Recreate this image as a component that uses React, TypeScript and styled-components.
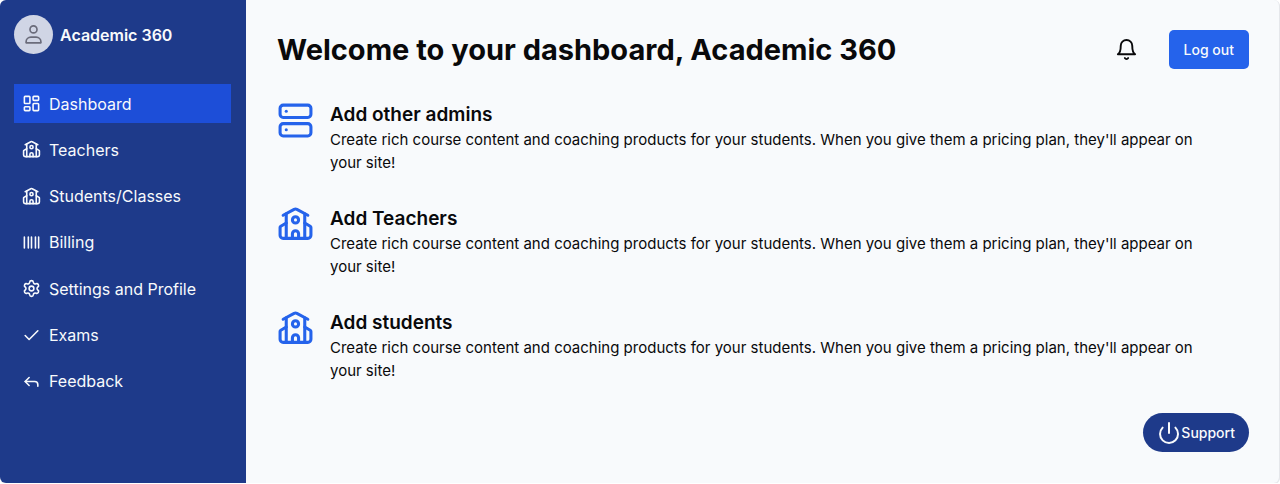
import React from "react";
import styled, { createGlobalStyle } from "styled-components";
import { LayoutDashboard, School, Settings, Check, Server, Barcode, Reply } from "lucide-react";

const GlobalStyle = createGlobalStyle`
  *, *::before, *::after { box-sizing: border-box; }
  body { margin: 0; background: #fff; color: #09090b; font-family: Inter, sans-serif; font-size: 16px; }
  h1, h2, p, ul { margin: 0; padding: 0; }
  ul { list-style: none; }
  button { font-family: inherit; cursor: pointer; }
`;

const Shell = styled.div`
  display: flex;
  min-height: calc(100vh - 1px);
  overflow: hidden;
  border-radius: 6px;
  background: #f8fafc;
  border-right: 1px solid #e5e7eb;
  box-shadow: 0 1px 0 #e5e7eb;
`;

const Sidebar = styled.aside`
  flex: 0 0 246px;
  padding: 15px 15px 15px 14px;
  background: #1e3a8a;
  color: #f8fafc;
`;

const Profile = styled.div`
  display: flex;
  align-items: center;
  gap: 7px;
  margin-bottom: 30px;
  font-size: 16px;
  line-height: 18px;
  font-weight: 600;
`;

const Avatar = styled.span`
  display: grid;
  place-items: center;
  width: 39px;
  height: 39px;
  border-radius: 50%;
  background: #d0d5e5;
  color: #6b6c7b;
`;

const NavList = styled.ul`
  display: flex;
  flex-direction: column;
  justify-content: space-between;
  min-height: 317px;
`;

const NavLink = styled.a<{ $active?: boolean }>`
  display: flex;
  align-items: center;
  gap: 8px;
  height: 39px;
  padding: 0 8px;
  background: ${({ $active }) => ($active ? "#1d4ed8" : "transparent")};
  color: inherit;
  font-size: 16px;
  text-decoration: none;
`;

const Main = styled.main`
  flex: 1;
  min-width: 0;
  padding: 30px 30px 31px 31px;
`;

const Header = styled.header`
  display: flex;
  align-items: center;
  justify-content: space-between;
  margin-bottom: 33px;
`;

const Title = styled.h1`
  font-size: 29px;
  line-height: 39px;
  font-weight: 700;
`;

const Actions = styled.div`
  display: flex;
  align-items: center;
  gap: 31px;
`;

const IconButton = styled.button`
  display: grid;
  padding: 0;
  border: 0;
  background: none;
  color: inherit;
`;

const LogoutButton = styled.button`
  height: 39px;
  padding: 0 15px;
  border: 0;
  border-radius: 5px;
  background: #2563eb;
  color: #f8fafc;
  font-size: 14px;
  font-weight: 500;
`;

const Features = styled.div`
  display: grid;
  gap: 32px;
`;

const Feature = styled.section`
  display: flex;
  gap: 16px;
  padding-right: 24px;
  svg { flex: none; color: #2563eb; }
`;

const FeatureTitle = styled.h2`
  font-size: 19px;
  line-height: 26px;
  font-weight: 600;
`;

const FeatureText = styled.p`
  font-size: 15px;
  line-height: 23px;
`;

const Footer = styled.footer`
  display: flex;
  justify-content: flex-end;
  margin-top: 31px;
`;

const SupportButton = styled.button`
  display: flex;
  align-items: center;
  height: 39px;
  padding: 0 14px;
  border: 0;
  border-radius: 20px;
  background: #1e3a8a;
  color: #f8fafc;
  font-size: 14px;
  font-weight: 500;
`;

type GlyphProps = { size: number; stroke?: number; d: string };

const Glyph = ({ size, stroke = 2, d }: GlyphProps) => (
  <svg width={size} height={size} viewBox="0 0 24 24" fill="none" stroke="currentColor"
    strokeWidth={stroke} strokeLinecap="round" strokeLinejoin="round" aria-hidden="true">
    <path d={d} />
  </svg>
);

const USER = "M12 2.200a4 4 0 1 1 0 8a4 4 0 0 1 0-8M3.500 21.500v-1a5.500 5.500 0 0 1 5.500-5.500h6a5.500 5.500 0 0 1 5.500 5.500v1z";
const BELL = "M6 8a6 6 0 0 1 12 0c0 7 3 9 3 9H3s3-2 3-9M10.300 21a1.940 1.940 0 0 0 3.400 0";
const POWER = "M12 2v10M18.400 6.600a9 9 0 1 1-12.770.040";

const nav = [
  { label: "Dashboard", Icon: LayoutDashboard, active: true },
  { label: "Teachers", Icon: School },
  { label: "Students/Classes", Icon: School },
  { label: "Billing", Icon: Barcode },
  { label: "Settings and Profile", Icon: Settings },
  { label: "Exams", Icon: Check },
  { label: "Feedback", Icon: Reply },
];

const features = [
  { title: "Add other admins", Icon: Server },
  { title: "Add Teachers", Icon: School },
  { title: "Add students", Icon: School },
];

export default function App() {
  return (
    <>
      <GlobalStyle />
      <Shell>
        <Sidebar>
          <Profile>
            <Avatar><Glyph size={21} stroke={1.9} d={USER} /></Avatar>
            Academic 360
          </Profile>
          <nav aria-label="Main">
            <NavList>
              {nav.map(({ label, Icon, active }) => (
                <li key={label}>
                  <NavLink href="#" $active={active} aria-current={active ? "page" : undefined}>
                    <Icon size={19} />
                    {label}
                  </NavLink>
                </li>
              ))}
            </NavList>
          </nav>
        </Sidebar>
        <Main>
          <Header>
            <Title>Welcome to your dashboard, Academic 360</Title>
            <Actions>
              <IconButton type="button" aria-label="Notifications"><Glyph size={23} d={BELL} /></IconButton>
              <LogoutButton type="button">Log out</LogoutButton>
            </Actions>
          </Header>
          <Features>
            {features.map(({ title, Icon }) => (
              <Feature key={title}>
                <Icon size={37} />
                <div>
                  <FeatureTitle>{title}</FeatureTitle>
                  <FeatureText>
                    Create rich course content and coaching products for your students. When you
                    give them a pricing plan, they'll appear on your site!
                  </FeatureText>
                </div>
              </Feature>
            ))}
          </Features>
          <Footer>
            <SupportButton type="button">
              <Glyph size={24} stroke={2} d={POWER} />
              Support
            </SupportButton>
          </Footer>
        </Main>
      </Shell>
    </>
  );
}
